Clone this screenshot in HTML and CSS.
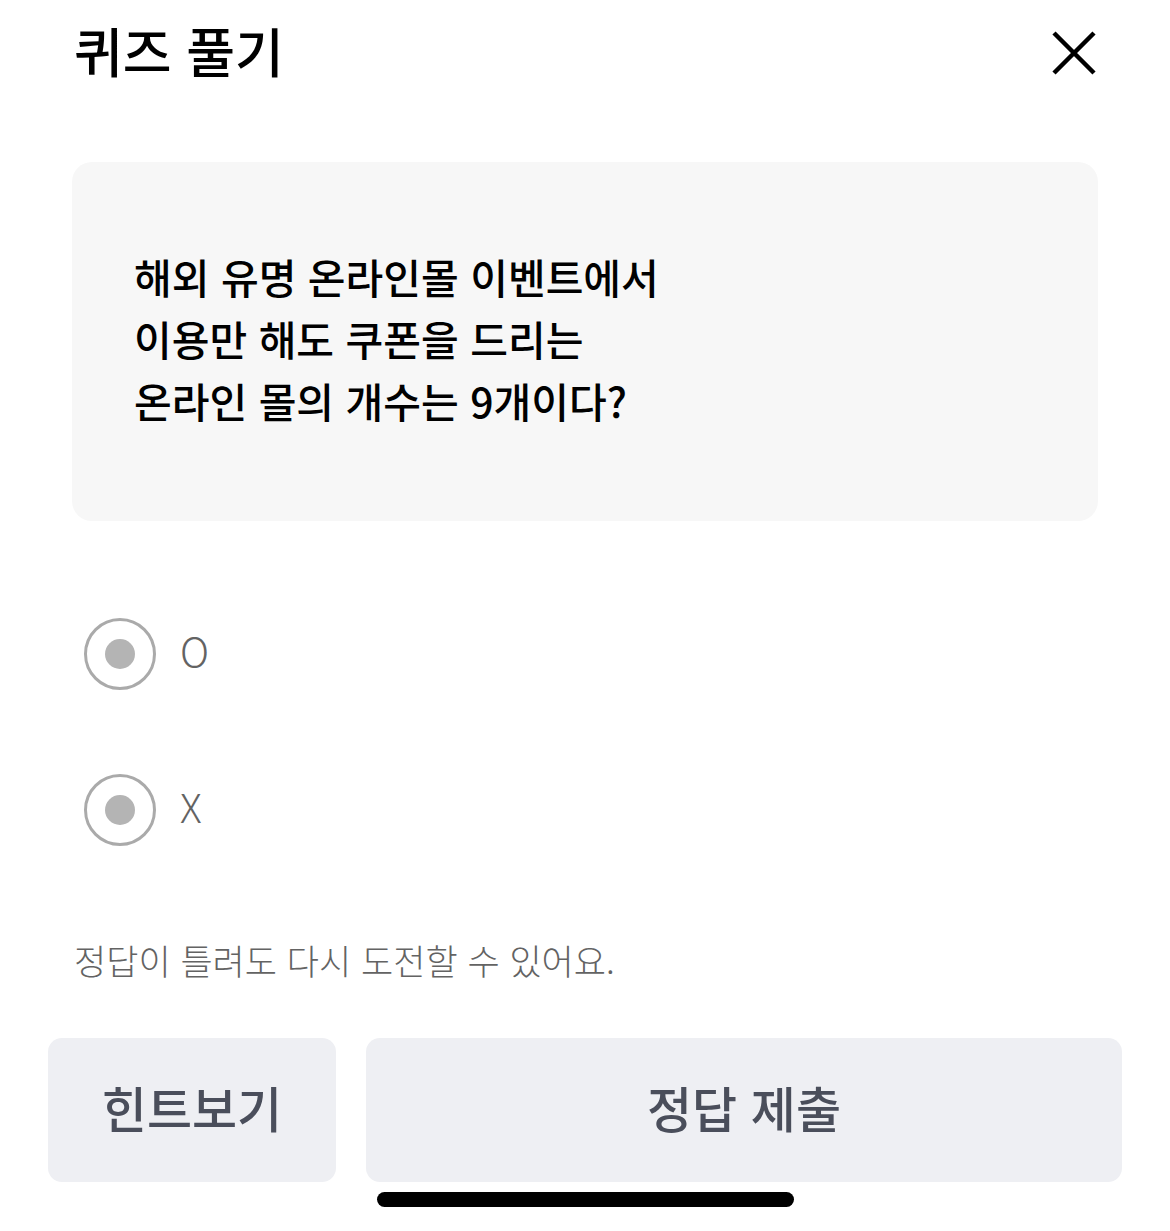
FILE: index.html
```html
<!DOCTYPE html>
<html lang="ko">
<head>
    <meta charset="UTF-8">
    <meta name="viewport" content="width=device-width, initial-scale=1.0">
    <title>퀴즈 풀기</title>
    <link rel="stylesheet" href="styles.css">
</head>
<body>

    <div id="quiz">
        <header class="topBar">
            <h1 class="title">퀴즈 풀기</h1>
            <button class="closeBtn" aria-label="닫기">
                <svg width="48" height="48" viewBox="0 0 48 48">
                    <path d="M4 4 L44 44 M44 4 L4 44" stroke="#000" stroke-width="4.5" fill="none"/>
                </svg>
            </button>
        </header>

        <div class="questionCard">
            <p class="question">해외 유명 온라인몰 이벤트에서<br>이용만 해도 쿠폰을 드리는<br>온라인 몰의 개수는 9개이다?</p>
        </div>

        <div class="options">
            <label class="option">
                <span class="radio"><span class="dot"></span></span>
                <span class="optionLabel">O</span>
            </label>
            <label class="option">
                <span class="radio"><span class="dot"></span></span>
                <span class="optionLabel">X</span>
            </label>
        </div>

        <p class="notice">정답이 틀려도 다시 도전할 수 있어요.</p>

        <div class="actions">
            <button class="actionBtn hint">힌트보기</button>
            <button class="actionBtn submit">정답 제출</button>
        </div>

        <div class="homeBar"></div>
    </div>

</body>
</html>
```

FILE: styles.css
```css
body {
    margin: 0;
    background: #ffffff;
    font-family: "Noto Sans CJK KR", "Noto Sans", sans-serif;
    color: #000000;
}

#quiz {
    width: 1170px;
    height: 1231px;
    box-sizing: border-box;
    padding: 0 48px 0 48px;
    display: flex;
    flex-direction: column;
}

.topBar {
    display: flex;
    justify-content: space-between;
    align-items: center;
    height: 108px;
    padding: 0 24px 0 26px;
}

.title {
    margin: 0;
    font-size: 53px;
    font-weight: 500;
    line-height: 1;
    margin-top: -8px;
}

.closeBtn {
    background: none;
    border: none;
    padding: 0;
    margin-top: -2px;
    width: 48px;
    height: 48px;
}

.questionCard {
    margin: 54px 24px 0 24px;
    height: 359px;
    background: #f7f7f7;
    border-radius: 20px;
    display: flex;
    align-items: center;
    padding: 0 62px;
}

.question {
    margin: 0 0 8px 0;
    font-size: 41px;
    font-weight: 500;
    line-height: 62px;
}

.options {
    display: flex;
    flex-direction: column;
    gap: 84px;
    margin: 97px 0 0 36px;
}

.option {
    display: flex;
    align-items: center;
    gap: 24px;
    height: 72px;
}

.radio {
    width: 72px;
    height: 72px;
    box-sizing: border-box;
    border: 3px solid #aaaaaa;
    border-radius: 50%;
    display: flex;
    justify-content: center;
    align-items: center;
}

.dot {
    width: 30px;
    height: 30px;
    border-radius: 50%;
    background: #b4b4b4;
}

.optionLabel {
    font-size: 40px;
    font-weight: 300;
    color: #636363;
    margin-top: -8px;
}

.notice {
    margin: 88px 0 0 26px;
    font-size: 35px;
    font-weight: 300;
    color: #636363;
}

.actions {
    display: flex;
    gap: 30px;
    margin-top: 53px;
}

.actionBtn {
    height: 144px;
    padding: 0 0 8px 0;
    border: none;
    border-radius: 14px;
    background: #eeeff3;
    color: #4a4e5b;
    font-family: inherit;
    font-size: 49px;
    font-weight: 500;
}

.hint {
    width: 288px;
}

.submit {
    flex: 1;
}

.homeBar {
    width: 417px;
    height: 15px;
    border-radius: 8px;
    background: #000000;
    margin: 10px 0 0 329px;
}
```
